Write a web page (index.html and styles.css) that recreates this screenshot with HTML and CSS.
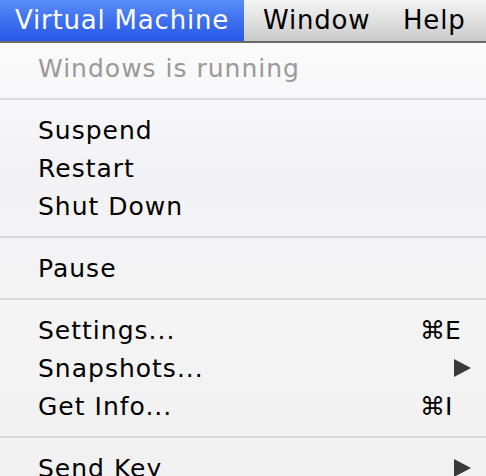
FILE: index.html
```html
<!DOCTYPE html>
<html>
<head>
<meta charset="utf-8">
<link rel="stylesheet" href="styles.css">
</head>
<body>
<div class="menubar">
  <div class="mb-item active">Virtual Machine</div>
  <div class="mb-item window">Window</div>
  <div class="mb-item">Help</div>
</div>
<div class="menu">
  <div class="item disabled"><span class="label">Windows is running</span></div>
  <div class="sep"></div>
  <div class="item"><span class="label">Suspend</span></div>
  <div class="item"><span class="label">Restart</span></div>
  <div class="item"><span class="label">Shut Down</span></div>
  <div class="sep"></div>
  <div class="item"><span class="label">Pause</span></div>
  <div class="sep"></div>
  <div class="item"><span class="label">Settings...</span><span class="key">⌘E</span></div>
  <div class="item"><span class="label">Snapshots...</span><span class="arrow"></span></div>
  <div class="item"><span class="label">Get Info...</span><span class="key">⌘I</span></div>
  <div class="sep"></div>
  <div class="item"><span class="label">Send Key</span><span class="arrow"></span></div>
</div>
</body>
</html>
```

FILE: styles.css
```css
*, *::before, *::after {
  box-sizing: border-box;
}
html, body {
  margin: 0;
  padding: 0;
}
body {
  width: 486px;
  height: 476px;
  overflow: hidden;
  font-family: "DejaVu Sans", "Liberation Sans", sans-serif;
  font-size: 25px;
  letter-spacing: 1px;
  background: #f2f2f4;
  color: #000;
}
.menubar {
  display: flex;
  height: 43px;
  border-bottom: 2px solid #6a6a6a;
  background: linear-gradient(#f4f4f4, #dedede 55%, #c9c9c9);
}
.mb-item {
  display: flex;
  align-items: center;
  white-space: nowrap;
  padding-left: 15px;
  font-size: 26px;
  letter-spacing: 0.8px;
  padding-bottom: 1px;
}
.mb-item.active {
  width: 244px;
  color: #fff;
  background: linear-gradient(#5b8ef7, #3d6ff0 50%, #2859e6);
}
.mb-item.window {
  width: 144px;
  padding-left: 19px;
}
.menu {
  padding-top: 6px;
  background: linear-gradient(180deg, #fbfbfc 0%, #f2f1f4 30%, #f4f4f5 60%, #f1f1f2 100%);
  height: 433px;
}
.item {
  display: flex;
  align-items: center;
  height: 38px;
  padding-left: 38px;
  white-space: nowrap;
}
.label {
  flex: 1;
}
.disabled {
  color: #999;
}
.key {
  width: 66px;
  letter-spacing: 0;
}
.arrow {
  width: 0;
  height: 0;
  margin-right: 15px;
  border-top: 9px solid transparent;
  border-bottom: 9px solid transparent;
  border-left: 17px solid #3a3a3a;
}
.sep {
  height: 24px;
  display: flex;
  align-items: center;
}
.sep::before {
  content: "";
  flex: 1;
  height: 2px;
  background: #d9d9db;
}
```
